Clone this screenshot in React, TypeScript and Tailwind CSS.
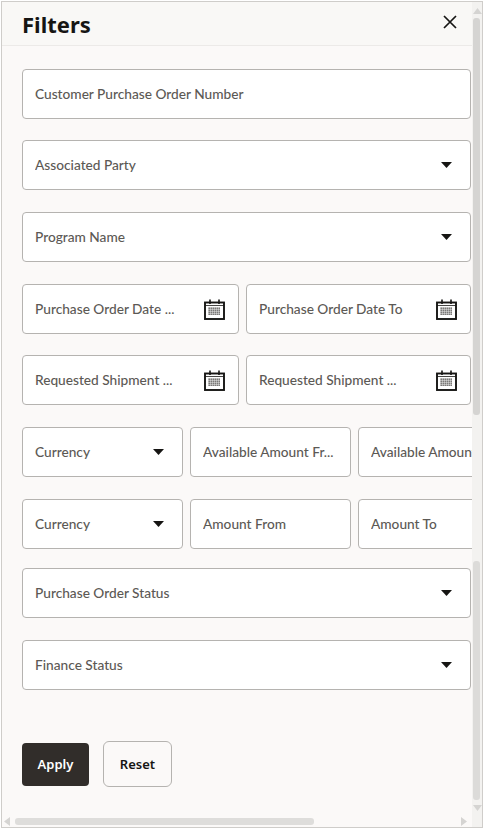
import React from "react";

function Caret() {
  return (
    <svg width="11" height="6" viewBox="0 0 11 6" className="shrink-0 -mt-[1px]">
      <path d="M0 0H11L5.5 6Z" fill="#161513" />
    </svg>
  );
}

function Calendar() {
  const dots: React.ReactNode[] = [];
  for (let r = 0; r < 4; r++) {
    for (let c = 0; c < 6; c++) {
      dots.push(<rect key={r + "-" + c} x={4.5 + c * 2} y={8.5 + r * 2} width="1.3" height="1.3" fill="#33312e" />);
    }
  }
  return (
    <svg width="21" height="21" viewBox="0 0 21 21" className="shrink-0">
      <rect x="1" y="3.5" width="19" height="16.5" fill="none" stroke="#161513" strokeWidth="1.9" />
      <path d="M1 6.5H20" stroke="#161513" strokeWidth="0.8" />
      <path d="M6 0.5V5M15 0.5V5" stroke="#161513" strokeWidth="1.6" />
      {dots}
    </svg>
  );
}

function Field({
  label,
  className = "",
  icon,
}: {
  label: string;
  className?: string;
  icon?: React.ReactNode;
}) {
  return (
    <div className={"h-[50px] flex items-center bg-white border border-[#b5b3b0] rounded-[4px] pl-[12px] shrink-0 overflow-hidden " + className}>
      <span className="flex-1 min-w-0 whitespace-nowrap overflow-hidden text-[13.7px] font-medium text-[#5c5955] font-['Lato',sans-serif]">{label}</span>
      {icon && <span className="ml-2 flex items-center">{icon}</span>}
    </div>
  );
}

function Arrow({ dir, className }: { dir: "up" | "down" | "left" | "right"; className: string }) {
  const d =
    dir === "up"
      ? "M0 6L4.5 0L9 6Z"
      : dir === "down"
        ? "M0 0H9L4.5 6Z"
        : dir === "left"
          ? "M6 0V9L0 4.5Z"
          : "M0 0V9L6 4.5Z";
  return (
    <svg width={dir === "up" || dir === "down" ? 9 : 6} height={dir === "up" || dir === "down" ? 6 : 9} className={"absolute " + className}>
      <path d={d} fill="#d5d4d2" />
    </svg>
  );
}

export default function App() {
  return (
    <div className="relative w-[484px] h-[829px] overflow-hidden bg-white font-['Noto_Sans','Open_Sans',sans-serif]">
      <div className="w-[482px] h-[827px] ml-[1px] mt-[1px] border border-[#cfcdca] bg-[#fbf9f8] flex flex-col overflow-hidden">
        <header className="h-[44px] shrink-0 flex items-center justify-between border-b border-[#eceae8] bg-[#f9f8f6] pl-[20px] pr-[16px] mr-[9px]">
          <h1 className="text-[22px] font-bold text-[#161513] leading-none">Filters</h1>
          <svg width="14" height="14" viewBox="0 0 14 14" className="-mt-[3px]">
            <path d="M1 1L13 13M13 1L1 13" stroke="#161513" strokeWidth="1.7" />
          </svg>
        </header>
        <main className="flex-1 flex flex-col pl-[20px] pt-[23px]">
          <Field label="Customer Purchase Order Number" className="w-[449px] pr-[18px]" />
          <Field label="Associated Party" className="w-[449px] mt-[21px] pr-[18px]" icon={<Caret />} />
          <Field label="Program Name" className="w-[449px] mt-[22px] pr-[18px]" icon={<Caret />} />
          <div className="flex gap-[7px] mt-[22px]">
            <Field label="Purchase Order Date ..." className="w-[217px] pr-[13px]" icon={<Calendar />} />
            <Field label="Purchase Order Date To" className="w-[225px] pr-[13px]" icon={<Calendar />} />
          </div>
          <div className="flex gap-[7px] mt-[21px]">
            <Field label="Requested Shipment ..." className="w-[217px] pr-[13px]" icon={<Calendar />} />
            <Field label="Requested Shipment ..." className="w-[225px] pr-[13px]" icon={<Calendar />} />
          </div>
          <div className="flex gap-[7px] mt-[22px] w-[450px] overflow-hidden">
            <Field label="Currency" className="w-[161px] pr-[18px]" icon={<Caret />} />
            <Field label="Available Amount Fr..." className="w-[161px] pr-[11px]" />
            <Field label="Available Amount To" className="w-[161px] pr-[11px]" />
          </div>
          <div className="flex gap-[7px] mt-[22px] w-[450px] overflow-hidden">
            <Field label="Currency" className="w-[161px] pr-[18px]" icon={<Caret />} />
            <Field label="Amount From" className="w-[161px] pr-[11px]" />
            <Field label="Amount To" className="w-[161px] pr-[11px]" />
          </div>
          <Field label="Purchase Order Status" className="w-[449px] mt-[19px] pr-[18px]" icon={<Caret />} />
          <Field label="Finance Status" className="w-[449px] mt-[22px] pr-[18px]" icon={<Caret />} />
          <div className="flex items-center gap-[14px] mt-[51px]">
            <button className="w-[67px] h-[43px] pt-[2px] bg-[#312d2a] rounded-[4px] text-white text-[13px] font-semibold">Apply</button>
            <button className="w-[69px] h-[46px] pt-[2px] border border-[#b5b3b0] rounded-[6px] text-[#161513] text-[13px] font-semibold">Reset</button>
          </div>
        </main>
      </div>
      {/* vertical scrollbar */}
      <div className="absolute left-[472px] top-[2px] w-[10px] h-[825px] bg-[#f3f2f0]">
        <Arrow dir="up" className="left-[1px] top-[6px]" />
        <div className="absolute left-[1px] top-[16px] w-[7px] h-[397px] rounded-[3px] bg-[#d5d4d2]" />
        <div className="absolute left-[1px] top-[559px] w-[7px] h-[239px] rounded-[3px] bg-[#dcdbd9]" />
        <Arrow dir="down" className="left-[1px] top-[803px]" />
      </div>
      {/* horizontal scrollbar */}
      <Arrow dir="left" className="left-[4px] top-[817px]" />
      <div className="absolute left-[15px] top-[818px] w-[299px] h-[7px] rounded-[3px] bg-[#dedddb]" />
      <Arrow dir="right" className="left-[461px] top-[817px]" />
    </div>
  );
}
